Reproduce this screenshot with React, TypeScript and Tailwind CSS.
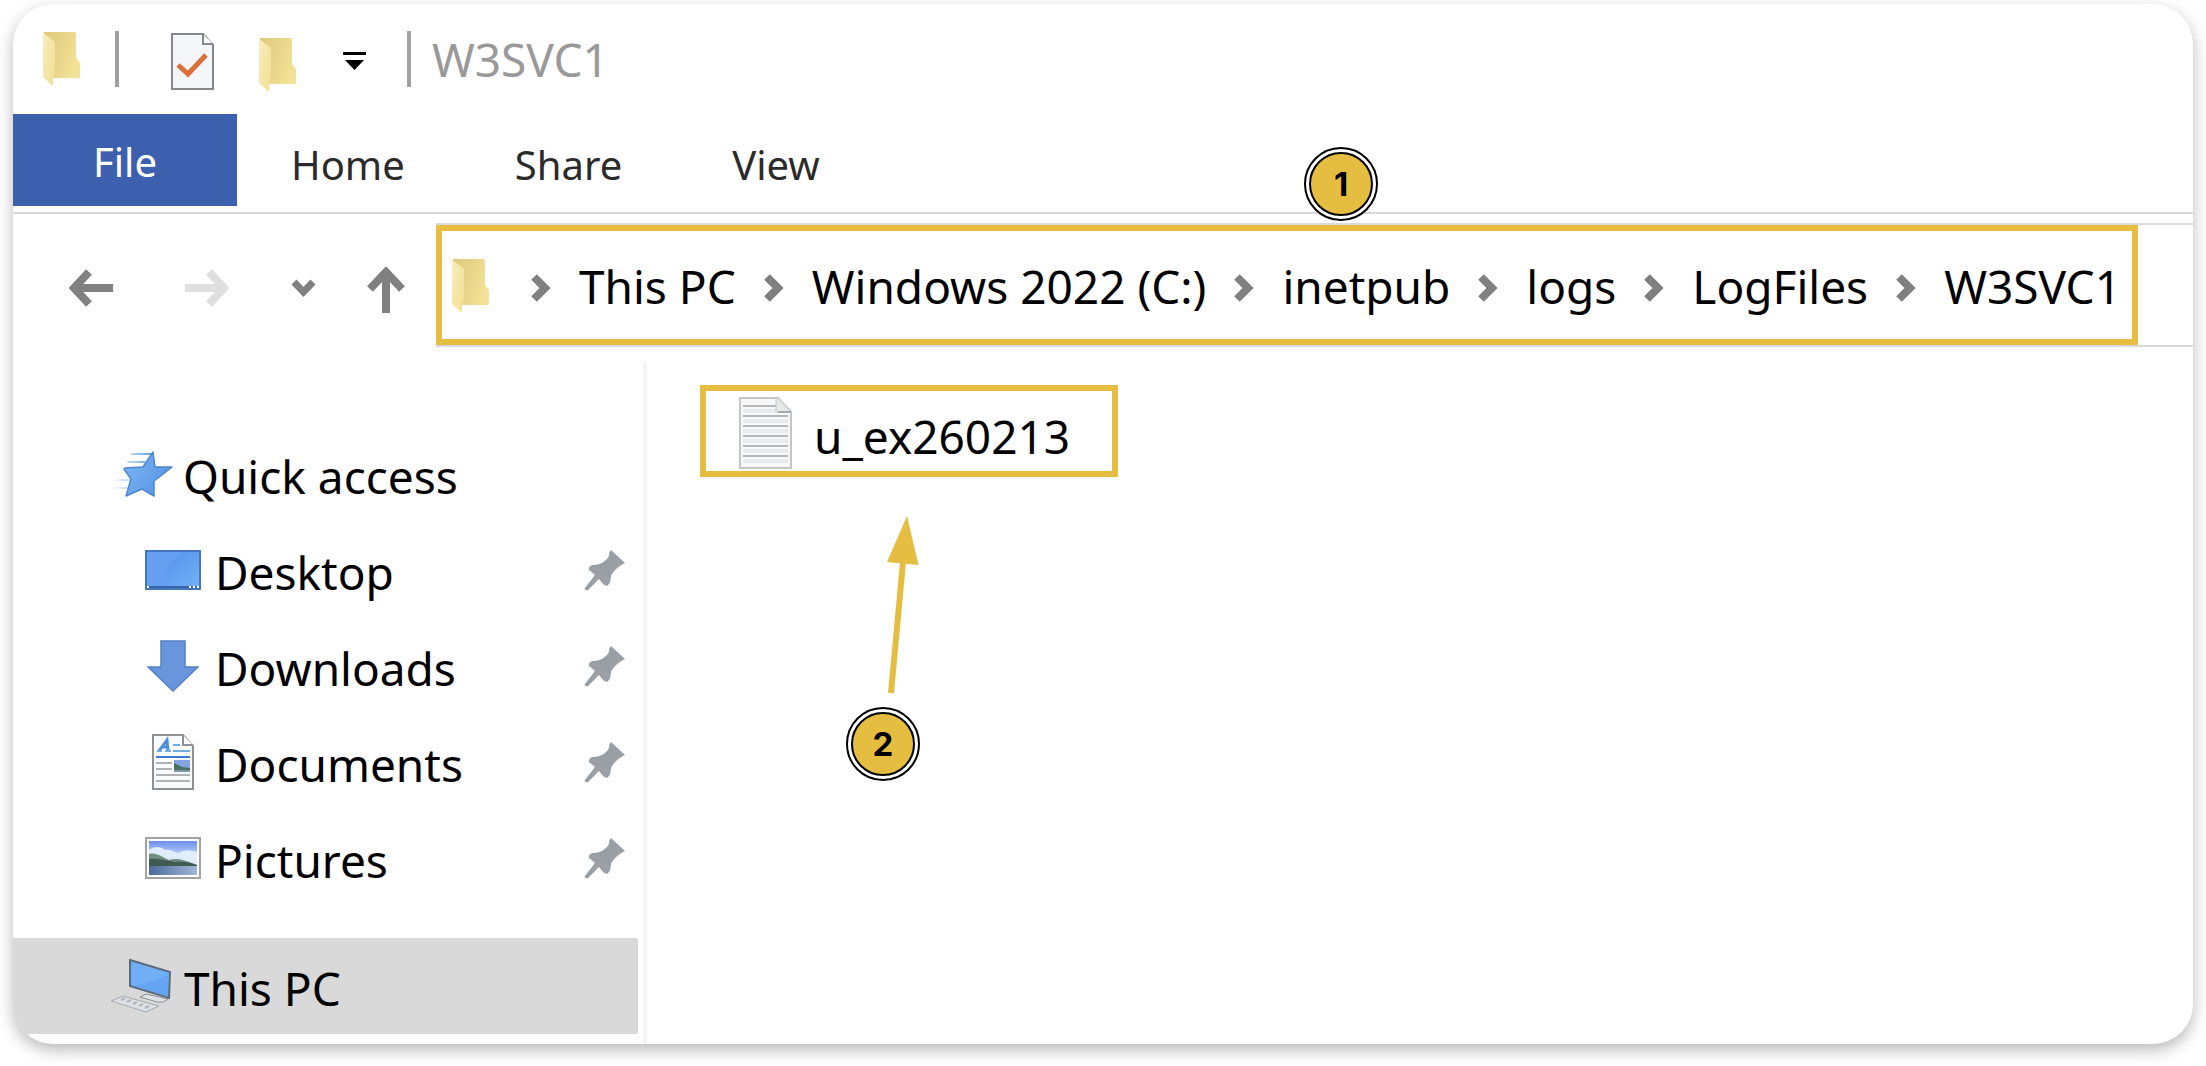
import type { ReactNode } from "react"

const tabs = ["Home", "Share", "View"]

const crumbs = ["This PC", "Windows 2022 (C:)", "inetpub", "logs", "LogFiles", "W3SVC1"]

const FolderIcon = () => (
  <svg width="38" height="54" viewBox="0 0 38 54" className="shrink-0" aria-hidden="true">
    <defs>
      <linearGradient id="folderBack" x1="0" x2="1" y1="0" y2="0.4">
        <stop offset="0" stopColor="#dfc87c" />
        <stop offset="0.55" stopColor="#e9d58a" />
        <stop offset="1" stopColor="#f2e196" />
      </linearGradient>
      <linearGradient id="folderFront" x1="0" x2="1" y1="0" y2="1">
        <stop offset="0" stopColor="#f9eebb" />
        <stop offset="1" stopColor="#f2de92" />
      </linearGradient>
    </defs>
    <path d="M1 0H31Q33 0 33 2V26L37 31V45Q37 46 36 46H8L1 4Z" fill="url(#folderBack)" />
    <path d="M0 1L11 9Q12 10 12 12V40L10 46V53Q9 54 8 52L1 46Q0 45 0 44Z" fill="url(#folderFront)" />
  </svg>
)

const CheckPageIcon = () => (
  <svg width="43" height="57" viewBox="0 0 43 57" aria-hidden="true">
    <path d="M1 1H32L42 12V56H1Z" fill="#f5f6f9" stroke="#85878a" strokeWidth="2" />
    <path d="M32 1V11H42" fill="#fff" stroke="#85878a" strokeWidth="2" />
    <path d="M7 32L17 41L35 22" fill="none" stroke="#d9703a" strokeWidth="5" />
  </svg>
)

const StarIcon = () => (
  <svg width="60" height="46" viewBox="0 0 60 46" aria-hidden="true">
    <defs>
      <linearGradient id="star" x1="0" x2="1" y1="0.2" y2="0.8">
        <stop offset="0" stopColor="#7cb5f2" />
        <stop offset="1" stopColor="#5592e6" />
      </linearGradient>
      <linearGradient id="trail">
        <stop offset="0" stopColor="#8fc0ec" stopOpacity="0.1" />
        <stop offset="1" stopColor="#5f9fdf" />
      </linearGradient>
    </defs>
    <path d="M18 2H38V4H18ZM14 10H32V12H14ZM4 28H20V30H4ZM0 36H16V38H0Z" fill="url(#trail)" />
    <path
      d="M40 1L42 16H59L45 27L41 30V45L29 38L13 45L18 28L11 18L12 17L30 16Z"
      fill="url(#star)"
      stroke="#4c86cc"
      strokeWidth="1.5"
      strokeLinejoin="round"
    />
  </svg>
)

const DesktopIcon = () => (
  <svg width="56" height="40" viewBox="0 0 56 40" aria-hidden="true">
    <defs>
      <linearGradient id="screen" x1="0" x2="1" y1="0" y2="1">
        <stop offset="0.3" stopColor="#5c98ef" />
        <stop offset="1" stopColor="#72b0f6" />
      </linearGradient>
    </defs>
    <path d="M0 0H56V40H0Z" fill="#4577c0" />
    <path d="M2 2H54V36H2Z" fill="#659ff2" />
    <path d="M14 36C18 24 26 10 38 2H54V36Z" fill="url(#screen)" />
    <path d="M2 36H54V38H2Z" fill="#3a64a6" />
    <path d="M2 36H4V38H2ZM44 36H46V38H44ZM48 36H50V38H48ZM52 36H54V38H52Z" fill="#fff" />
  </svg>
)

const DownloadIcon = () => (
  <svg width="52" height="52" viewBox="0 0 52 52" aria-hidden="true">
    <path d="M14 1H38V27H51L26 51L1 27H14Z" fill="#6895dc" stroke="#5480c4" strokeWidth="1.5" />
  </svg>
)

const DocumentIcon = () => (
  <svg width="42" height="56" viewBox="0 0 42 56" aria-hidden="true">
    <path d="M1 1H31L41 12V55H1Z" fill="#fafbfc" stroke="#8f9194" strokeWidth="2" />
    <path d="M31 1V11H41" fill="#fff" stroke="#8f9194" strokeWidth="2" />
    <path d="M7 17L15 6L16 17M10 13H16" fill="none" stroke="#4c90d9" strokeWidth="3" />
    <path d="M5 17H10M13 17H19M21 11H28M21 17H38" stroke="#6fabe8" strokeWidth="2" />
    <path d="M4 23H38" stroke="#3f7bd0" strokeWidth="2" />
    <path d="M4 29H20M4 35H20M4 41H38M4 47H38" stroke="#b0b2b5" strokeWidth="2" />
    <path d="M22 26H38V38H22Z" fill="#86a4e4" />
    <path d="M22 29L30 33L38 34V38H22Z" fill="#49705f" />
    <path d="M22 36H38V38H22Z" fill="#7d97b5" />
  </svg>
)

const PictureIcon = () => (
  <svg width="56" height="42" viewBox="0 0 56 42" aria-hidden="true">
    <defs>
      <linearGradient id="sky" x1="0" x2="0" y1="0" y2="1">
        <stop offset="0" stopColor="#6f8fee" />
        <stop offset="0.45" stopColor="#a9c4f6" />
        <stop offset="1" stopColor="#eaf3fd" />
      </linearGradient>
      <linearGradient id="lake" x1="0" x2="1" y1="0" y2="0">
        <stop offset="0" stopColor="#4a6a9c" />
        <stop offset="1" stopColor="#a3b8d8" />
      </linearGradient>
    </defs>
    <path d="M1 1H55V41H1Z" fill="#fff" stroke="#a3a3a3" strokeWidth="2" />
    <path d="M4 4H52V30H4Z" fill="url(#sky)" />
    <path d="M4 13C9 9 15 9 20 13C26 12 29 15 33 16C40 12 46 13 52 15V28H4Z" fill="#e0edfc" />
    <path d="M4 17C11 15 17 20 24 23C30 21 38 22 52 28V30H4Z" fill="#6f8d80" />
    <path d="M4 22C14 21 22 24 30 25C38 24 46 26 52 28V30H4Z" fill="#3f5a50" />
    <path d="M4 29H52V38H4Z" fill="url(#lake)" />
  </svg>
)

const ComputerIcon = () => (
  <svg width="62" height="54" viewBox="0 0 62 54" aria-hidden="true">
    <path d="M30 38L36 35L58 40Q54 44 47 43Z" fill="#e0e3e6" stroke="#8a9096" strokeWidth="1" />
    <path d="M1 42L13 37L49 47L36 53Z" fill="#dde1e5" stroke="#a3a9af" strokeWidth="1" />
    <path d="M11 41L15 39M17 43L21 41M23 45L27 43M29 47L33 45M35 49L39 47" stroke="#b0b6bc" strokeWidth="2" />
    <path d="M20 1L60 13L59 39L20 27Z" fill="#70aef6" stroke="#5b6c7c" strokeWidth="2" />
    <path d="M24 27C34 25 48 20 58 16V37Z" fill="#66a5f3" />
  </svg>
)

const PinIcon = () => (
  <svg width="42" height="41" viewBox="0 0 42 41" aria-hidden="true">
    <path
      d="M27 0L41 13C36 15 29 21 27 26C27 30 26 34 23 36L20 35L15 29L4 40L1 40L1 38L11 25L5 20Q4 17 8 15C13 15 15 14 18 13C23 10 26 6 25 3Z"
      fill="#98a0a6"
    />
  </svg>
)

const TextFileIcon = () => (
  <svg width="53" height="72" viewBox="0 0 53 72" aria-hidden="true">
    <path d="M1 1H39L52 15V71H1Z" fill="#f8f8f9" stroke="#c3c5c7" strokeWidth="2" />
    <path
      d="M4 14H37M4 24H49M4 34H49M4 44H49M4 54H49M4 64H49"
      stroke="#e9eaec"
      strokeWidth="4"
    />
    <path d="M4 9H37M4 19H49M4 29H49M4 39H49M4 49H49M4 59H49" stroke="#b5b7b9" strokeWidth="2" />
    <path d="M37 1V15H52L39 1Z" fill="#e8e9ea" stroke="#c3c5c7" strokeWidth="1" />
    <path d="M39 15H52" stroke="#a9abad" strokeWidth="2" />
  </svg>
)

const CrumbChevron = () => (
  <svg width="20" height="28" viewBox="0 0 20 28" className="mt-1 shrink-0" aria-hidden="true">
    <path d="M3 3L14 14L3 25" fill="none" stroke="#808080" strokeWidth="8" />
  </svg>
)

const Badge = ({ children }: { children: ReactNode }) => (
  <span className="flex size-[74px] items-center justify-center rounded-full border-2 border-black bg-white p-[3px]">
    <span className="flex size-full items-center justify-center rounded-full border-2 border-black bg-[#e4bd41] pt-[2px] font-[Inter,sans-serif] text-[33px] font-bold text-black">
      {children}
    </span>
  </span>
)

const places = [
  { name: "Desktop", icon: <DesktopIcon /> },
  { name: "Downloads", icon: <DownloadIcon /> },
  { name: "Documents", icon: <DocumentIcon /> },
  { name: "Pictures", icon: <PictureIcon /> },
]

const TitleBar = () => (
  <header className="flex h-[110px] items-center pl-[30px]">
    <FolderIcon />
    <div className="ml-[34px] h-14 w-1 bg-[#a0a0a0]" />
    <button type="button" aria-label="Properties" className="ml-[52px] pt-1">
      <CheckPageIcon />
    </button>
    <button type="button" aria-label="New folder" className="ml-[45px] pt-3">
      <FolderIcon />
    </button>
    <button type="button" aria-label="Customize toolbar" className="ml-[46px] pt-1">
      <svg width="23" height="18" viewBox="0 0 23 18" aria-hidden="true">
        <path d="M0 0H23V3H0ZM2 8H21L11.500 18Z" fill="#000" />
      </svg>
    </button>
    <div className="ml-[41px] h-14 w-1 bg-[#a0a0a0]" />
    <h1 className="ml-[21px] text-[46px] text-[#999]">W3SVC1</h1>
  </header>
)

const Ribbon = () => (
  <div className="flex border-b-2 border-[#d9d9dc] pb-[6px] text-[40px] text-[#2b2b2b]">
    <button type="button" className="h-[92px] w-56 bg-[#3c60ae] pt-1 text-white">
      File
    </button>
    <div className="ml-[54px] flex items-center gap-[110px] pt-[10px]">
      {tabs.map((tab) => (
        <button key={tab} type="button">
          {tab}
        </button>
      ))}
    </div>
  </div>
)

const Toolbar = () => (
  <div className="flex pt-[9px]">
    <div className="flex w-[423px] items-center pt-[6px] pl-14">
      <button type="button" aria-label="Back">
        <svg width="44" height="38" viewBox="0 0 44 38" aria-hidden="true">
          <path d="M44 19H6M20 3L5 19L20 35" fill="none" stroke="#808080" strokeWidth="8" />
        </svg>
      </button>
      <button type="button" aria-label="Forward" className="ml-[72px]">
        <svg width="44" height="38" viewBox="0 0 44 38" aria-hidden="true">
          <path d="M0 19H38M24 3L39 19L24 35" fill="none" stroke="#dfdfdf" strokeWidth="8" />
        </svg>
      </button>
      <button type="button" aria-label="Recent locations" className="ml-[62px]">
        <svg width="25" height="18" viewBox="0 0 25 18" aria-hidden="true">
          <path d="M3 3L12.500 13L22 3" fill="none" stroke="#808080" strokeWidth="7" />
        </svg>
      </button>
      <button type="button" aria-label="Up" className="ml-[51px] pt-1">
        <svg width="38" height="46" viewBox="0 0 38 46" aria-hidden="true">
          <path d="M19 46V6M3 22L19 5L35 22" fill="none" stroke="#808080" strokeWidth="8" />
        </svg>
      </button>
    </div>
    <div className="relative flex-1 border-y-2 border-[#d9d9dc]">
      <nav
        aria-label="Address"
        className="mr-[55px] flex h-[120px] items-center gap-[41px] border-[6px] border-[#e4bd41] pt-[2px] pl-[10px] text-[46px] whitespace-nowrap text-black"
      >
        <FolderIcon />
        <ol className="flex items-center gap-7">
          {crumbs.map((crumb) => (
            <li key={crumb} className="flex items-center gap-7">
              <CrumbChevron />
              <a href="#">{crumb}</a>
            </li>
          ))}
        </ol>
      </nav>
      <div className="absolute -top-[78px] left-[868px]">
        <Badge>1</Badge>
      </div>
    </div>
  </div>
)

const Sidebar = () => (
  <aside className="w-[634px] shrink-0 border-r-4 border-[#f5f5f5] pt-16 pb-[9px] text-[46px] text-black">
    <a href="#" className="flex h-24 items-center pl-[100px]">
      <StarIcon />
      <span className="ml-[10px] pt-1">Quick access</span>
    </a>
    <ul>
      {places.map((place) => (
        <li key={place.name} className="flex h-24 items-center justify-between pr-[17px] pl-[132px]">
          <a href="#" className="flex items-center">
            <span className="flex w-14 justify-center">{place.icon}</span>
            <span className="ml-[14px] pt-1">{place.name}</span>
          </a>
          <PinIcon />
        </li>
      ))}
    </ul>
    <a href="#" className="mt-8 mr-[5px] flex h-24 items-center rounded-r-xs bg-[#d9d9d9] pl-[97px]">
      <ComputerIcon />
      <span className="ml-3 pt-1">This PC</span>
    </a>
  </aside>
)

const FileList = () => (
  <main className="flex-1 pt-[23px] pl-[53px]">
    <div className="relative w-[418px]">
      <a
        href="#"
        className="flex h-[92px] items-center border-[6px] border-[#e4bd41] pt-1 pl-[33px] text-[46px] text-black"
      >
        <TextFileIcon />
        <span className="ml-[22px] pt-[6px]">u_ex260213</span>
      </a>
      <svg
        width="34"
        height="178"
        viewBox="0 0 34 178"
        className="absolute top-[131px] left-[186px]"
        aria-hidden="true"
      >
        <path d="M21 0L32.500 49L1 46Z" fill="#e4bd41" />
        <path d="M17 46L5 177" stroke="#e4bd41" strokeWidth="6" />
      </svg>
      <div className="absolute top-[322px] left-[146px]">
        <Badge>2</Badge>
      </div>
    </div>
  </main>
)

const App = () => (
  <div className="flex min-h-screen bg-white px-[13px] pt-1 pb-[22px] font-['Noto_Sans',sans-serif]">
    <div className="flex flex-1 flex-col overflow-hidden rounded-[40px] bg-white shadow-[0_6px_16px_rgba(0,0,0,0.28)]">
      <TitleBar />
      <Ribbon />
      <Toolbar />
      <div className="flex flex-1 pt-[15px]">
        <Sidebar />
        <FileList />
      </div>
    </div>
  </div>
)

export default App
